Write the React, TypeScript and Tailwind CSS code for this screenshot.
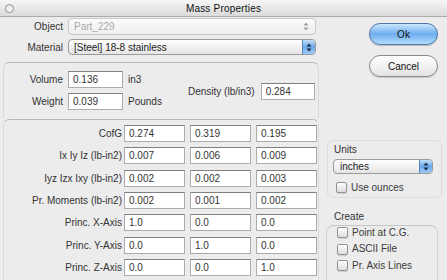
import React from "react";

const Arrows = ({ color }: { color: string }) => (
  <svg width="6" height="9" viewBox="0 0 6 9">
    <polygon points="3,0.5 5.5,3.5 0.5,3.5" fill={color} />
    <polygon points="3,8.5 5.5,5.5 0.5,5.5" fill={color} />
  </svg>
);

const Field = ({ v, w = "w-[61px]" }: { v: string; w?: string }) => (
  <div
    className={`${w} h-[17px] shrink-0 bg-white border border-[#acacac] border-t-[#808080] flex items-center pl-[4px] text-[10px] text-[#333]`}
  >
    {v}
  </div>
);

const Check = ({ label }: { label: string }) => (
  <div className="flex items-center gap-[4px] h-[11px]">
    <div className="w-[11px] h-[11px] rounded-[2px] border border-[#929292] bg-linear-to-b from-[#ffffff] to-[#dcdcdc] shadow-[0_1px_1px_rgba(0,0,0,0.12)]" />
    <span className="text-[10px] text-[#3a3a3a] leading-none">{label}</span>
  </div>
);

const rows: [string, string, string, string][] = [
  ["CofG", "0.274", "0.319", "0.195"],
  ["Ix Iy Iz (lb-in2)", "0.007", "0.006", "0.009"],
  ["Iyz Izx Ixy (lb-in2)", "0.002", "0.002", "0.003"],
  ["Pr. Moments (lb-in2)", "0.002", "0.001", "0.002"],
  ["Princ. X-Axis", "1.0", "0.0", "0.0"],
  ["Princ. Y-Axis", "0.0", "1.0", "0.0"],
  ["Princ. Z-Axis", "0.0", "0.0", "1.0"],
];

export default function App() {
  return (
    <div className="w-[447px] h-[280px] overflow-hidden bg-[#ececec] font-['Liberation_Sans',Arial,sans-serif] text-[10px] text-[#222] flex flex-col">
      {/* Title bar */}
      <div className="h-[17px] shrink-0 relative flex items-center justify-center bg-linear-to-b from-[#f6f6f6] to-[#dadada] border-b border-[#ababab]">
        <div className="absolute left-[5px] top-[4px] w-[9px] h-[9px] rounded-full border border-[#8c8c8c] bg-linear-to-b from-[#e8e8e8] to-[#fafafa]" />
        <span className="text-[10px] text-[#111] tracking-[0.2px]">Mass Properties</span>
      </div>

      <div className="flex flex-1">
        {/* Left column */}
        <div className="w-[320px] shrink-0 pl-[3px] flex flex-col">
          {/* Object */}
          <div className="mt-[1px] flex items-center h-[17px]">
            <div className="w-[60px] text-right text-[#333]">Object</div>
            <div className="ml-[5px] w-[248px] h-[17px] rounded-[4px] border border-[#cacaca] bg-linear-to-b from-[#fbfbfb] to-[#efefef] flex items-center pl-[5px] pr-[6px] justify-between">
              <span className="text-[#a8a8a8]">Part_229</span>
              <Arrows color="#a0a0a0" />
            </div>
          </div>
          {/* Material */}
          <div className="mt-[4px] flex items-center h-[16px]">
            <div className="w-[60px] text-right text-[#333]">Material</div>
            <div className="ml-[5px] w-[248px] h-[16px] rounded-[4px] border border-[#9a9a9a] bg-linear-to-b from-[#ffffff] to-[#e4e4e4] flex items-center overflow-hidden">
              <span className="pl-[5px] flex-1 text-[#222]">[Steel] 18-8 stainless</span>
              <div className="w-[13px] h-full bg-linear-to-b from-[#c4def9] via-[#6aa8ec] to-[#9fcbf7] border-l border-[#5d86b8] flex items-center justify-center rounded-r-[3px]">
                <Arrows color="#1a2a44" />
              </div>
            </div>
          </div>

          {/* Group 1 */}
          <div className="mt-[7px] w-[316px] h-[56px] shrink-0 border-t border-x border-t-[#b8b8b8] border-x-[#d8d8d8] rounded-t-[6px] pt-[8px] flex items-center">
            <div className="w-[184px] shrink-0 flex flex-col gap-[5px] self-start">
              <div className="flex items-center h-[17px]">
                <div className="w-[59px] text-right text-[#333]">Volume</div>
                <div className="ml-[5px]"><Field v="0.136" w="w-[55px]" /></div>
                <div className="ml-[5px] text-[#333]">in3</div>
              </div>
              <div className="flex items-center h-[17px]">
                <div className="w-[59px] text-right text-[#333]">Weight</div>
                <div className="ml-[5px]"><Field v="0.039" w="w-[55px]" /></div>
                <div className="ml-[5px] text-[#333]">Pounds</div>
              </div>
            </div>
            <div className="flex items-center mt-[-6px]">
              <span className="text-[#333]">Density (lb/in3)</span>
              <div className="ml-[6px]"><Field v="0.284" w="w-[54px]" /></div>
            </div>
          </div>

          {/* Group 2 */}
          <div className="mt-[1px] w-[316px] flex-1 border-t border-x border-t-[#b8b8b8] border-x-[#dadada] rounded-t-[6px] pt-[5px] flex flex-col gap-[5.33px]">
            {rows.map((r) => (
              <div key={r[0]} className="flex items-center h-[17px]">
                <div className="w-[118px] text-right text-[#333] whitespace-nowrap">{r[0]}</div>
                <div className="ml-[2px] flex gap-[5px]">
                  <Field v={r[1]} />
                  <Field v={r[2]} />
                  <Field v={r[3]} />
                </div>
              </div>
            ))}
          </div>
        </div>

        {/* Right column */}
        <div className="flex-1 flex flex-col">
          <button className="mt-[6px] ml-[49px] w-[69px] h-[22px] rounded-full border border-[#4f77a8] bg-linear-to-b from-[#cde6fd] via-[#6eaef0] to-[#b3dcfc] text-[10px] text-[#111] shadow-[0_1px_1px_rgba(0,0,0,0.2)]">
            Ok
          </button>
          <button className="mt-[10px] ml-[49px] w-[69px] h-[22px] rounded-full border border-[#8a8a8a] bg-linear-to-b from-[#ffffff] via-[#f2f2f2] to-[#e2e2e2] text-[10px] text-[#111] shadow-[0_1px_1px_rgba(0,0,0,0.15)]">
            Cancel
          </button>

          {/* Units */}
          <div className="mt-[63px] ml-[7px] w-[115px] h-[58px] border border-[#dcdcdc] rounded-[6px] pt-[3px] flex flex-col">
            <div className="pl-[6px] h-[12px] leading-[12px] text-[#333]">Units</div>
            <div className="mt-[3px] ml-[5px] w-[100px] h-[15px] rounded-[4px] border border-[#9a9a9a] bg-linear-to-b from-[#ffffff] to-[#e4e4e4] flex items-center overflow-hidden">
              <span className="pl-[6px] flex-1 text-[#222]">inches</span>
              <div className="w-[13px] h-full bg-linear-to-b from-[#c4def9] via-[#6aa8ec] to-[#9fcbf7] border-l border-[#5d86b8] flex items-center justify-center rounded-r-[3px]">
                <Arrows color="#1a2a44" />
              </div>
            </div>
            <div className="mt-[8px] ml-[8px]">
              <Check label="Use ounces" />
            </div>
          </div>

          {/* Create */}
          <div className="mt-[13px] pl-[14px] h-[12px] leading-[12px] text-[#333]">Create</div>
          <div className="mt-[2px] ml-[6px] w-[112px] flex-1 border-t border-x border-t-[#c4c4c4] border-x-[#d4d4d4] rounded-t-[8px] pt-[1px] pl-[10px] flex flex-col gap-[5.5px]">
            <Check label="Point at C.G." />
            <Check label="ASCII File" />
            <Check label="Pr. Axis Lines" />
          </div>
        </div>
      </div>
    </div>
  );
}
